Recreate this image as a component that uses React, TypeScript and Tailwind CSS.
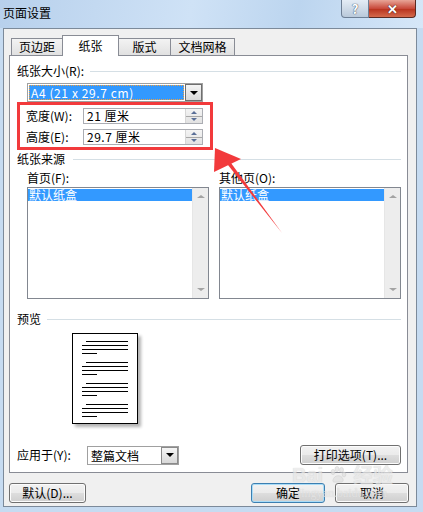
import React from "react"

const btnBg =
  "bg-[linear-gradient(180deg,#f2f2f2_0%,#ebebeb_48%,#dddddd_52%,#cfcfcf_100%)]"

function Button({ label, w, primary }: { label: string; w: string; primary?: boolean }) {
  return (
    <div
      className={`${w} h-[20px] flex items-center justify-center rounded-[3px] border ${btnBg} ${
        primary
          ? "border-[#3c7fb1] shadow-[inset_0_0_0_1px_#a9dcf7]"
          : "border-[#707070] shadow-[inset_0_0_0_1px_#fcfcfc]"
      } text-[12px] text-black`}
    >
      {label}
    </div>
  )
}

function SpinInput({ value }: { value: string }) {
  return (
    <div className="w-[120px] h-[16px] flex border border-[#abadb3] bg-white">
      <div className="flex-1 pl-[3px] text-[12px] leading-[14px] tracking-[0.5px]">{value}</div>
      <div className="w-[17px] flex flex-col border-l border-[#d6d6d6] bg-[linear-gradient(180deg,#f4f4f4,#e2e2e2)]">
        <div className="flex-1 flex items-center justify-center">
          <div className="w-0 h-0 border-x-[3px] border-x-transparent border-b-[3px] border-b-[#5a6f97]" />
        </div>
        <div className="h-px bg-[#a8a8a8]" />
        <div className="flex-1 flex items-center justify-center">
          <div className="w-0 h-0 border-x-[3px] border-x-transparent border-t-[3px] border-t-[#5a6f97]" />
        </div>
      </div>
    </div>
  )
}

function DropButton({ dark }: { dark?: boolean }) {
  return (
    <div
      className={`w-[17px] h-full flex items-center justify-center border ${
        dark ? "border-[#6f6f6f]" : "border-[#8a8a8a]"
      } bg-[linear-gradient(180deg,#f5f5f5,#d8d8d8)]`}
    >
      <div className="w-0 h-0 border-x-[4px] border-x-transparent border-t-[4px] border-t-black" />
    </div>
  )
}

function ListBox({ w }: { w: string }) {
  return (
    <div className={`${w} h-[112px] flex border border-[#828790] bg-white`}>
      <div className="flex-1 pt-[1px]">
        <div className="h-[12px] bg-[#3399ff] text-white text-[12px] leading-[12px] pl-[1px]">
          默认纸盒
        </div>
      </div>
      <div className="w-[16px] flex flex-col justify-between items-center py-[7px] bg-[#ededed] border-l border-[#e6e6e6]">
        <div className="w-0 h-0 border-x-[4px] border-x-transparent border-b-[3px] border-b-[#a3a3a3]" />
        <div className="w-0 h-0 border-x-[4px] border-x-transparent border-t-[3px] border-t-[#a3a3a3]" />
      </div>
    </div>
  )
}

function SectionLabel({ text, gap }: { text: string; gap: string }) {
  return (
    <div className="flex items-center h-[14px] pr-[6px]">
      <span className="text-[12px] leading-[14px]">{text}</span>
      <div className={`flex-1 h-px bg-[#d5dfe5] ${gap}`} />
    </div>
  )
}

function PreviewPage() {
  const groups = [0, 1, 2, 3]
  return (
    <div className="ml-[55px] w-[66px] h-[91px] border border-black bg-white shadow-[3px_3px_3px_rgba(0,0,0,0.3)] pt-[7px] pl-[9px] flex flex-col gap-[8px]">
      {groups.map((g) => (
        <div key={g} className="flex flex-col gap-[3px]">
          <div className="ml-[4px] w-[42px] h-px bg-black" />
          <div className="w-[46px] h-px bg-black" />
          <div className="w-[46px] h-px bg-black" />
          <div className="w-[15px] h-px bg-black" />
        </div>
      ))}
    </div>
  )
}

export default function App() {
  return (
    <div className="relative w-[423px] h-[512px] overflow-hidden flex flex-col bg-[#c6dbf1] text-black font-['Noto_Sans_CJK_SC',sans-serif]">
      {/* title bar */}
      <div className="h-[28px] flex items-start bg-[linear-gradient(100deg,#b7d0ec_0%,#cfe2f6_45%,#bcd5ef_70%,#d6e7f8_100%)]">
        <div className="pl-[3px] pt-[5px] text-[12px] leading-[16px]">页面设置</div>
        <div className="ml-auto mr-[7px] flex">
          <div className="w-[28px] h-[18px] flex items-center justify-center rounded-bl-[4px] border border-t-0 border-[#6d7f95] bg-[linear-gradient(180deg,#e4ecf5,#b9c9da)] text-[13px] font-bold text-white [text-shadow:0_0_1px_#3b4b60,0_0_1px_#3b4b60]">
            ?
          </div>
          <div className="w-[47px] h-[18px] flex items-center justify-center rounded-br-[4px] border border-t-0 border-l-0 border-[#5b2a22] bg-[linear-gradient(180deg,#e8a597,#c8493a_50%,#b93520_55%,#d56a4c)] text-[13px] font-bold text-white [text-shadow:0_0_1px_#4a1a10,0_0_1px_#4a1a10]">
            ✕
          </div>
        </div>
      </div>

      {/* dialog body */}
      <div className="ml-[3px] mr-[6px] mb-[5px] flex-1 flex flex-col border border-[#7c8a9a] bg-[#f0f0f0]">
        {/* tabs */}
        <div className="mt-[6px] ml-[7px] flex items-end h-[20px]">
          <div className="w-[52px] h-[17px] flex items-center justify-center border border-b-0 border-[#898c95] bg-[linear-gradient(180deg,#f3f3f3,#e1e1e1)] text-[12px]">
            页边距
          </div>
          <div className="relative z-10 -ml-px -mb-px w-[57px] h-[21px] flex items-center justify-center border border-b-0 border-[#898c95] bg-white text-[12px]">
            纸张
          </div>
          <div className="-ml-px w-[53px] h-[17px] flex items-center justify-center border border-b-0 border-[#898c95] bg-[linear-gradient(180deg,#f3f3f3,#e1e1e1)] text-[12px]">
            版式
          </div>
          <div className="-ml-px w-[65px] h-[17px] flex items-center justify-center border border-b-0 border-[#898c95] bg-[linear-gradient(180deg,#f3f3f3,#e1e1e1)] text-[12px]">
            文档网格
          </div>
        </div>

        {/* tab panel */}
        <div className="ml-[5px] w-[399px] h-[418px] border border-[#898c95] bg-white pl-[7px] flex flex-col">
          <div className="mt-[8px]">
            <SectionLabel text="纸张大小(R):" gap="ml-[6px]" />
          </div>

          <div className="mt-[5px] ml-[10px] w-[176px] h-[19px] flex border border-[#a0a0a0]">
            <div className="flex-1 m-px bg-[#3399ff] outline-1 outline-dotted outline-[#f0a040] -outline-offset-1 text-white text-[12px] leading-[15px] pl-[2px] tracking-[0.6px]">
              A4 (21 x 29.7 cm)
            </div>
            <DropButton dark />
          </div>

          {/* highlighted width/height */}
          <div className="w-[196px] h-[48px] border-[3px] border-[#f23a3c] pl-[6px] pt-[3px] flex flex-col gap-[5px]">
            <div className="flex items-center h-[16px]">
              <span className="w-[57px] text-[12px] leading-[14px]">宽度(W):</span>
              <SpinInput value="21 厘米" />
            </div>
            <div className="flex items-center h-[16px]">
              <span className="w-[57px] text-[12px] leading-[14px]">高度(E):</span>
              <SpinInput value="29.7 厘米" />
            </div>
          </div>

          <div className="mt-[2px]">
            <SectionLabel text="纸张来源" gap="ml-[8px]" />
          </div>

          <div className="mt-[5px] ml-[10px] flex gap-[10px]">
            <div className="flex flex-col gap-[2px]">
              <span className="text-[12px] leading-[14px]">首页(F):</span>
              <ListBox w="w-[182px]" />
            </div>
            <div className="flex flex-col gap-[2px]">
              <span className="text-[12px] leading-[14px]">其他页(O):</span>
              <ListBox w="w-[182px]" />
            </div>
          </div>

          <div className="mt-[13px]">
            <SectionLabel text="预览" gap="ml-[6px]" />
          </div>

          <div className="mt-[7px]">
            <PreviewPage />
          </div>

          <div className="mt-[21px] h-[20px] pr-[6px] flex items-center">
            <span className="w-[70px] text-[12px] leading-[14px]">应用于(Y):</span>
            <div className="w-[92px] h-[19px] flex border border-[#a0a0a0] bg-white">
              <div className="flex-1 pl-[3px] text-[12px] leading-[17px]">整篇文档</div>
              <DropButton />
            </div>
            <div className="ml-auto">
              <Button label="打印选项(T)..." w="w-[101px]" />
            </div>
          </div>
        </div>

        {/* bottom buttons */}
        <div className="mt-[10px] ml-[5px] mr-[7px] flex">
          <Button label="默认(D)..." w="w-[77px]" />
          <div className="ml-auto flex gap-[10px]">
            <Button label="确定" w="w-[74px]" primary />
            <Button label="取消" w="w-[74px]" />
          </div>
        </div>
      </div>

      {/* annotation arrow */}
      <svg className="absolute left-0 top-0 pointer-events-none" width="423" height="512">
        <polygon points="215,148 214,172 241,159" fill="#f23a3c" />
        <polygon points="224,160 231,163 282,233" fill="#f23a3c" />
      </svg>

      {/* watermark */}
      <div className="absolute left-[292px] top-[464px] flex flex-col items-center pointer-events-none text-[#e6e6e6] opacity-70 [text-shadow:0_0_1px_#c4c4c4]">
        <div className="flex items-center gap-[6px] text-[20px] leading-[22px] font-bold font-['Liberation_Sans',sans-serif]">
          <span>Bai</span>
          <svg width="18" height="18" viewBox="0 0 18 18">
            <g fill="#e0e0e0" stroke="#c4c4c4" strokeWidth="0.6">
              <ellipse cx="4" cy="6" rx="2" ry="2.6" />
              <ellipse cx="8" cy="3" rx="2" ry="2.6" />
              <ellipse cx="12.5" cy="4" rx="2" ry="2.6" />
              <ellipse cx="15" cy="8.5" rx="1.8" ry="2.4" />
              <path d="M4 14 C5 9 12 8 14 13 C15 17 11 16 9 16 C7 16 3 17 4 14 Z" />
            </g>
          </svg>
          <span className="font-['Noto_Sans_CJK_SC',sans-serif]">经验</span>
        </div>
        <span className="text-[12px] leading-[14px] font-['Liberation_Serif',serif]">jingyan.baidu.com</span>
      </div>
    </div>
  )
}
